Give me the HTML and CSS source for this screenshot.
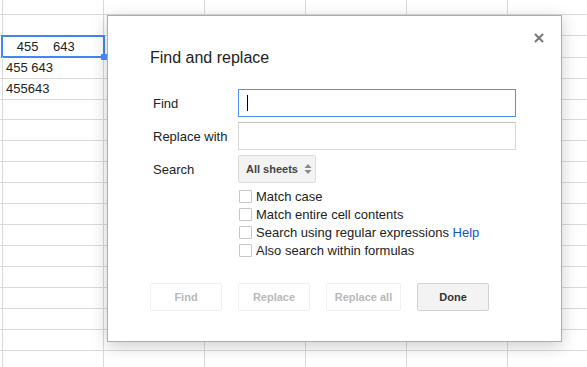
FILE: index.html
```html
<!DOCTYPE html>
<html lang="en">

<head>
    <meta charset="UTF-8">
    <meta name="viewport" content="width=device-width, initial-scale=1.0">
    <title>Find and replace</title>
    <link rel="stylesheet" href="styles.css">
</head>

<body>

    <!-- SHEET -->
    <div class="sheet" id="sheet"></div>

    <!-- DIALOG -->
    <div class="dialog">
        <span class="close">
            <svg width="10" height="10" viewBox="0 0 10 10">
                <path d="M1 1L9 9M9 1L1 9" stroke="#777" stroke-width="2" />
            </svg>
        </span>
        <h2 class="dialog-title">Find and replace</h2>

        <div class="form">
            <label class="label" for="find">Find</label>
            <div class="input focus" id="find"><span class="caret"></span></div>

            <label class="label" for="replace">Replace with</label>
            <div class="input" id="replace"></div>

            <label class="label">Search</label>
            <div>
                <div class="select">All sheets
                    <svg width="8" height="12" viewBox="0 0 8 12">
                        <path d="M4 1L7.5 5H0.5Z M4 11L7.5 7H0.5Z" fill="#888" />
                    </svg>
                </div>
            </div>
        </div>

        <div class="checks">
            <div class="check"><span class="box"></span>Match case</div>
            <div class="check"><span class="box"></span>Match entire cell contents</div>
            <div class="check"><span class="box"></span>Search using regular expressions <a href="#" class="help">Help</a></div>
            <div class="check"><span class="box"></span>Also search within formulas</div>
        </div>

        <div class="buttons">
            <button class="btn disabled w72">Find</button>
            <button class="btn disabled w72">Replace</button>
            <button class="btn disabled w75">Replace all</button>
            <button class="btn w72">Done</button>
        </div>
    </div>

    <script>
//build sheet rows
const data = ['', '', '   455    643', '455 643', '455643']
const sheet = document.getElementById('sheet')
for (let r = 0; r < 18; r++) {
    const row = document.createElement('div')
    row.className = r === 0 ? 'row first' : 'row'
    let html = '<div class="cell stub"></div>'
    for (let c = 0; c < 6; c++) {
        let text = c === 0 && data[r] ? data[r] : ''
        let cls = 'cell'
        if (r === 2 && c === 0) cls += ' selected'
        html += `<div class="${cls}">${text}</div>`
    }
    row.innerHTML = html
    sheet.appendChild(row)
}
    </script>
</body>

</html>
```

FILE: styles.css
```css
*{
    padding: 0;
    margin: 0;
    box-sizing: border-box;
}
body{
    width: 587px;
    height: 367px;
    overflow: hidden;
    background: #fff;
    font-family: "Liberation Sans", Arial, sans-serif;
    color: #222;
    position: relative;
}

/* sheet */
.row{
    display: grid;
    grid-template-columns: 3px repeat(6, 101px);
    height: 21px;
}
.row.first{
    height: 15px;
}
.cell{
    border-right: 1px solid #dadada;
    border-bottom: 1px solid #dadada;
    font-size: 13px;
    line-height: 21px;
    padding-left: 3px;
    white-space: pre;
    position: relative;
}
.cell.stub{
    padding: 0;
}
.selected::after{
    content: '';
    position: absolute;
    top: -1px;
    left: -2px;
    right: -2px;
    bottom: -1px;
    border: 2px solid #4285f4;
}
.selected::before{
    content: '';
    position: absolute;
    right: -4px;
    bottom: -3px;
    width: 6px;
    height: 6px;
    background: #4285f4;
    z-index: 1;
}

/* dialog */
.dialog{
    position: absolute;
    left: 107px;
    top: 15px;
    width: 455px;
    height: 327px;
    background: #fff;
    border: 1px solid #acacac;
    box-shadow: 0 4px 16px rgba(0, 0, 0, .2);
    padding: 32px 0 0 42px;
}
.close{
    position: absolute;
    top: 17px;
    right: 17px;
    width: 10px;
    height: 10px;
    display: flex;
}
.dialog-title{
    font-size: 16px;
    font-weight: normal;
    line-height: 20px;
    color: #222;
}
.form{
    margin: 21px 0 0 3px;
    display: grid;
    grid-template-columns: 85px 278px;
    grid-auto-rows: 28px;
    row-gap: 5px;
    align-items: center;
}
.label{
    font-size: 13px;
}
.input{
    height: 28px;
    border: 1px solid #d9d9d9;
    border-top-color: #c0c0c0;
    display: flex;
    align-items: center;
    padding-left: 8px;
}
.input.focus{
    border: 1px solid #4d90fe;
}
.caret{
    width: 1px;
    height: 16px;
    background: #000;
}
.select{
    display: inline-flex;
    align-items: center;
    gap: 6px;
    height: 28px;
    width: 78px;
    padding-left: 7px;
    background: #f3f3f3;
    border: 1px solid #dcdcdc;
    border-radius: 2px;
    font-size: 11px;
    font-weight: bold;
    color: #444;
}
.checks{
    margin: 4px 0 0 88px;
}
.check{
    display: flex;
    align-items: center;
    height: 18px;
    font-size: 13px;
    white-space: pre;
}
.box{
    width: 13px;
    height: 13px;
    border: 1px solid #c6c6c6;
    border-radius: 1px;
    margin: 0 4px 0 1px;
}
.help{
    color: #15c;
    text-decoration: none;
}
.buttons{
    margin-top: 24px;
    display: flex;
    gap: 16px;
}
.btn{
    height: 28px;
    font-family: inherit;
    font-size: 11px;
    font-weight: bold;
    color: #333;
    background: #f3f3f3;
    border: 1px solid #d2d2d2;
    border-radius: 2px;
}
.btn.disabled{
    background: #fff;
    border-color: #f0f0f0;
    color: #b8b8b8;
}
.w72{
    width: 72px;
}
.w75{
    width: 75px;
}
```
